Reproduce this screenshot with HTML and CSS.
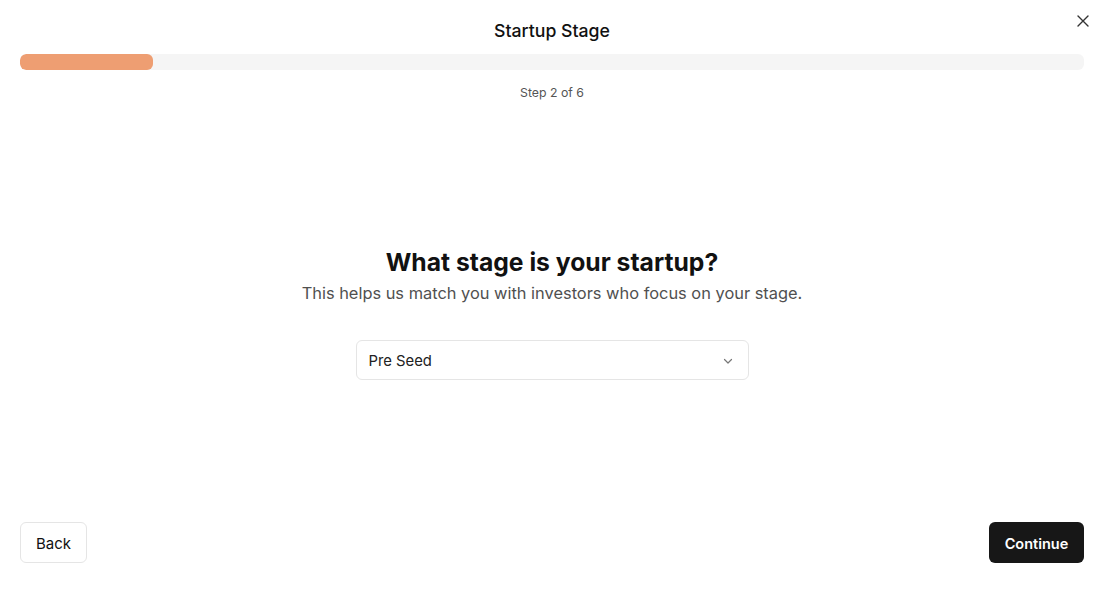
FILE: index.html
```html
<!DOCTYPE html>
<html>
<head>
<meta charset="utf-8">
<link rel="stylesheet" href="styles.css">
</head>
<body>
<div class="page">
  <button class="close" aria-label="Close">
    <svg width="14" height="14" viewBox="0 0 14 14"><path d="M2 2L12 12M12 2L2 12" stroke="#333" stroke-width="1.4" stroke-linecap="round"/></svg>
  </button>
  <header class="header">
    <h1 class="title">Startup Stage</h1>
    <div class="progress"><div class="progress-fill" style="width:12.5%"></div></div>
    <div class="step">Step 2 of 6</div>
  </header>
  <main class="main">
    <h2 class="question">What stage is your startup?</h2>
    <p class="hint">This helps us match you with investors who focus on your stage.</p>
    <div class="select">
      <span>Pre Seed</span>
      <svg width="12" height="12" viewBox="0 0 12 12"><path d="M2.5 4.5L6 8L9.5 4.5" fill="none" stroke="#777" stroke-width="1.2" stroke-linecap="round" stroke-linejoin="round"/></svg>
    </div>
  </main>
  <footer class="footer">
    <button class="btn btn-back">Back</button>
    <button class="btn btn-continue">Continue</button>
  </footer>
</div>
</body>
</html>
```
FILE: styles.css
```css
* { box-sizing: border-box; }
html, body { margin: 0; padding: 0; background: #fff; }
body { font-family: Inter, "Noto Sans", sans-serif; color: #111; }
.page {
  position: relative;
  height: 600px;
  display: flex;
  flex-direction: column;
  padding: 19px 18px 37px 20px;
}
.close {
  position: absolute;
  top: 14px;
  right: 12px;
  width: 14px;
  height: 14px;
  padding: 0;
  border: 0;
  background: none;
  display: flex;
}
.header { display: flex; flex-direction: column; align-items: center; }
.title {
  margin: 0;
  font-size: 17.7px;
  line-height: 24px;
  font-weight: 500;
  color: #111;
}
.progress {
  margin-top: 11px;
  width: 100%;
  height: 16px;
  border-radius: 6px;
  background: #f5f5f5;
  overflow: hidden;
}
.progress-fill {
  height: 100%;
  border-radius: 6px;
  background: #ee9e72;
}
.step {
  margin-top: 13px;
  font-size: 12.3px;
  line-height: 20px;
  color: #555;
}
.main {
  flex: 1;
  display: flex;
  flex-direction: column;
  align-items: center;
  justify-content: center;
  padding-top: 1px;
}
.question {
  margin: 0;
  font-size: 24.7px;
  line-height: 32px;
  font-weight: 700;
  color: #111;
}
.hint {
  margin: 3px 0 0;
  font-size: 16.4px;
  line-height: 24px;
  color: #505050;
}
.select {
  margin-top: 35px;
  width: 393px;
  height: 40px;
  border: 1px solid #e5e5e5;
  border-radius: 6px;
  display: flex;
  align-items: center;
  justify-content: space-between;
  padding: 1px 14px 0 12px;
  font-size: 14.8px;
  color: #222;
}
.footer { display: flex; justify-content: space-between; }
.btn {
  height: 41px;
  border-radius: 6px;
  font-family: Inter, "Noto Sans", sans-serif;
  font-size: 15px;
  padding: 1px 0 0;
}
.btn-back {
  width: 67px;
  background: #fff;
  border: 1px solid #e5e5e5;
  color: #111;
}
.btn-continue {
  width: 95px;
  background: #171717;
  border: 0;
  color: #fff;
  font-weight: 600;
  font-size: 14.5px;
}
```
